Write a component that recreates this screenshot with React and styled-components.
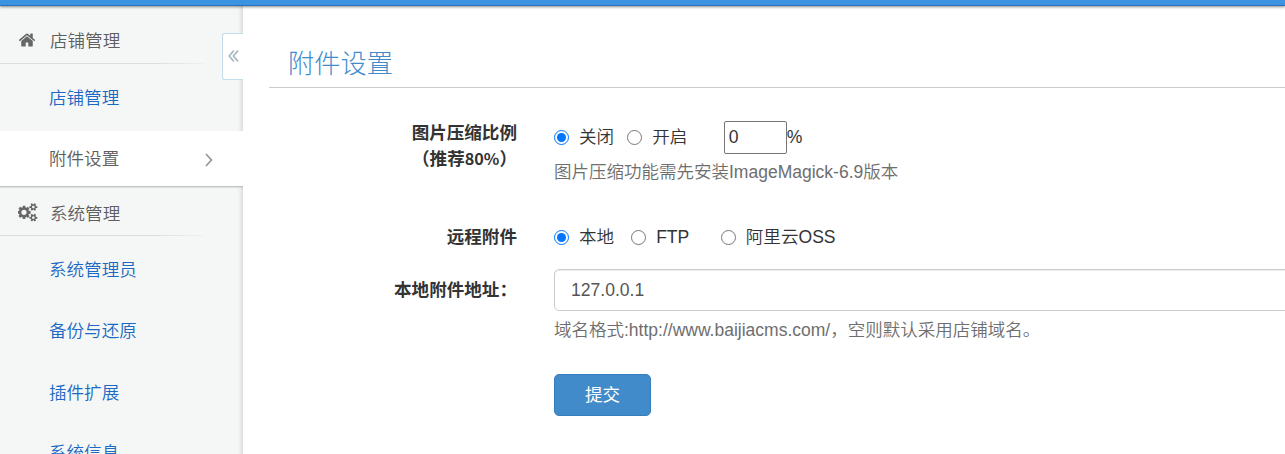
import React from "react";
import styled, { createGlobalStyle, css } from "styled-components";

const GlobalStyle = createGlobalStyle`
  *, *::before, *::after { box-sizing: border-box; }
  html, body { margin: 0; background: #fff; }
  body {
    height: 454px;
    overflow: hidden;
    color: #333;
    font: 350 17.57px/25px "Liberation Sans", "Noto Sans CJK SC", sans-serif;
  }
`;

const Page = styled.div`
  height: 454px;
  display: flex;
  flex-direction: column;
  overflow: hidden;
`;

const TopBar = styled.header`
  flex: none;
  height: 6px;
  position: relative;
  z-index: 3;
  background: #3c93e0;
  border-bottom: 1px solid #2a72b8;
  box-shadow: 0 1px 3px rgba(0, 0, 0, 0.45);
`;

const Columns = styled.div`
  flex: 1;
  min-height: 0;
  display: flex;
`;

const Sidebar = styled.nav`
  flex: none;
  width: 243px;
  position: relative;
  overflow: hidden;
  background: linear-gradient(to left, #dcdedd 0, #edefee 3px, #f5f7f7 6px);
`;

const GroupTitle = styled.div`
  height: ${(p) => p.$height}px;
  width: 205px;
  display: flex;
  align-items: flex-end;
  padding: 0 0 ${(p) => p.$bottom}px ${(p) => p.$left}px;
  color: #5e5e5e;
  border-bottom: 1px solid;
  border-image: linear-gradient(to right, #dcdedd 75%, #f0f2f2) 1;

  svg {
    flex: none;
    fill: #666;
    margin-bottom: 5px;
  }
  span {
    margin-left: ${(p) => p.$gap}px;
    white-space: nowrap;
  }
`;

const MenuItem = styled.a`
  height: ${(p) => p.$height}px;
  display: flex;
  align-items: center;
  justify-content: space-between;
  padding: 1px 30px 0 49px;
  color: #1b69c3;
  ${(p) =>
    p.$active &&
    css`
      padding-top: 2px;
      color: #5e5e5e;
      background: #fff;
      border-bottom: 1px solid #c2c4c4;
      box-shadow: 0 1px 1px rgba(0, 0, 0, 0.08);
    `}
`;

const CollapseTab = styled.button`
  position: absolute;
  top: 27px;
  right: 0;
  width: 21px;
  height: 47px;
  padding: 0 0 2px;
  display: flex;
  align-items: center;
  justify-content: center;
  background: #fff;
  border: 1px solid #c4ddec;
  border-right: 0;
  border-radius: 3px 0 0 3px;
`;

const Main = styled.main`
  flex: 1;
  min-width: 0;
  padding: 31px 0 0 26px;
`;

const Title = styled.h3`
  height: 51px;
  margin: 0;
  padding: 11px 0 0 19px;
  border-bottom: 1px solid #ccc;
  color: #428bca;
  font-size: 26.25px;
  line-height: 32px;
  font-weight: 300;
`;

const Row = styled.div`
  display: flex;
  margin-top: ${(p) => p.$top}px;
`;

const Label = styled.label`
  flex: none;
  width: 248px;
  margin-right: 37px;
  padding-top: ${(p) => p.$top || 0}px;
  text-align: right;
  font-weight: 700;

  span {
    display: block;
    height: 25px;
    line-height: 24px;
  }
`;

const Digits = styled.b`
  font-family: "Noto Sans CJK SC", sans-serif;
  font-size: 16.2px;
  font-weight: 700;
`;

const Field = styled.div`
  flex: 1;
  min-width: 0;
`;

const Options = styled.div`
  height: ${(p) => p.$height}px;
  display: flex;
  align-items: center;
`;

const Option = styled.label`
  display: flex;
  align-items: center;
  margin-right: ${(p) => p.$after || 0}px;
  white-space: nowrap;
`;

const Radio = styled.input.attrs({ type: "radio" })`
  width: 15px;
  height: 15px;
  margin: 0 10px 1px 0;
`;

const RatioInput = styled.input`
  width: 63px;
  height: 33px;
  padding: 0 4px;
  border: 1px solid #767676;
  border-radius: 2px;
  background: #fff;
  color: #333;
  font: inherit;
`;

const Help = styled.p`
  margin: ${(p) => p.$top}px 0 0;
  color: #6e6e6e;
  font-size: 17.5px;
  white-space: nowrap;
`;

const TextInput = styled.input`
  display: block;
  width: 760px;
  height: 42px;
  padding: 0 16px;
  border: 1px solid #ccc;
  border-radius: 5px;
  box-shadow: inset 0 1px 1px rgba(0, 0, 0, 0.075);
  color: #555;
  font: inherit;
`;

const Submit = styled.button`
  display: block;
  width: 97px;
  height: 42px;
  margin: 31px 0 0;
  padding: 0;
  border: 1px solid #357ebd;
  border-radius: 5px;
  background: #428bca;
  color: #fff;
  font: inherit;
  font-weight: 400;
`;

const HomeIcon = () => (
  <svg width="18" height="18" viewBox="0 0 1792 1792">
    <path d="M1472 992v480q0 26-19 45t-45 19h-384v-384h-256v384h-384q-26 0-45-19t-19-45v-480q0-1 .5-3t.5-3l575-474 575 474q1 2 1 6zm223-69l-62 74q-8 9-21 11h-3q-13 0-21-7l-692-577-692 577q-12 8-24 7-13-2-21-11l-62-74q-8-10-7-23.5t11-21.5l719-599q32-26 76-26t76 26l244 204v-195q0-14 9-23t23-9h192q14 0 23 9t9 23v408l219 182q10 8 11 21.5t-7 23.5z" />
  </svg>
);

const smallCog =
  "v140q0 16-149 31-12 27-30 52 51 113 51 138 0 4-4 7-122 71-124 71-8 0-46-47t-52-68q-20 2-30 2t-30-2q-14 21-52 68t-46 47q-2 0-124-71-4-3-4-7 0-25 51-138-18-25-30-52-149-15-149-31v-140q0-16 149-31 13-29 30-52-51-113-51-138 0-4 4-7 4-2 35-20t59-34 30-16q8 0 46 46.5t52 67.5q20-2 30-2t30 2q51-71 92-112l6-2q4 0 124 70 4 3 4 7 0 25-51 138 17 23 30 52 149 15 149 31z";

const CogsIcon = () => (
  <svg width="20" height="18.7" viewBox="0 0 1920 1792">
    <path
      fillRule="evenodd"
      d={
        "M832 896q0-106-75-181t-181-75-181 75-75 181 75 181 181 75 181-75 75-181zM1600 1408q0-52-38-90t-90-38-90 38-38 90q0 53 37.5 90.5t90.5 37.5 90.5-37.5 37.5-90.5zM1600 384q0-52-38-90t-90-38-90 38-38 90q0 53 37.5 90.5t90.5 37.5 90.5-37.5 37.5-90.5zM1216 805v185q0 10-7 19.5t-16 10.5l-155 24q-11 35-32 76 34 48 90 115 7 11 7 20 0 12-7 19-23 30-82.5 89.5t-78.5 59.5q-11 0-21-7l-115-90q-37 19-77 31-11 108-23 155-7 24-30 24h-186q-11 0-20-7.5t-10-17.5l-23-153q-34-10-75-31l-118 89q-7 7-20 7-11 0-21-8-144-133-144-160 0-9 7-19 10-14 41-53t47-61q-23-44-35-82l-152-24q-10-1-17-9.5t-7-19.5v-185q0-10 7-19.5t16-10.5l155-24q11-35 32-76-34-48-90-115-7-11-7-20 0-12 7-20 22-30 82-89t79-59q11 0 21 7l115 90q34-18 77-32 11-108 23-154 7-24 30-24h186q11 0 20 7.5t10 17.5l23 153q34 10 75 31l118-89q8-7 20-7 11 0 21 8 144 133 144 160 0 8-7 19-12 16-42 54t-45 60q23 48 34 82l152 23q10 2 17 10.5t7 19.5z" +
        "M1856 1338" + smallCog +
        "M1856 314" + smallCog
      }
    />
  </svg>
);

const ChevronRight = () => (
  <svg width="8" height="14" viewBox="0 0 8 14" fill="none" stroke="#999" strokeWidth="1.8">
    <path d="M1 1l5.4 6L1 13" />
  </svg>
);

const DoubleLeft = () => (
  <svg width="11" height="12" viewBox="0 0 11 12" fill="none" stroke="#aabac4" strokeWidth="1.7">
    <path d="M5.8 .6L1.2 6l4.6 5.4M10 .6L5.4 6 10 11.4" />
  </svg>
);

export default function App() {
  return (
    <Page>
      <GlobalStyle />
      <TopBar />
      <Columns>
        <Sidebar>
          <GroupTitle $height={58} $left={17.5} $gap={14.5} $bottom={9}>
            <HomeIcon />
            <span>店铺管理</span>
          </GroupTitle>
          <MenuItem $height={67}>店铺管理</MenuItem>
          <MenuItem $active $height={56}>
            附件设置
            <ChevronRight />
          </MenuItem>
          <GroupTitle $height={49} $left={18} $gap={12} $bottom={8}>
            <CogsIcon />
            <span>系统管理</span>
          </GroupTitle>
          <MenuItem $height={67}>系统管理员</MenuItem>
          <MenuItem $height={56}>备份与还原</MenuItem>
          <MenuItem $height={67}>插件扩展</MenuItem>
          <MenuItem $height={53}>系统信息</MenuItem>
          <CollapseTab aria-label="收起">
            <DoubleLeft />
          </CollapseTab>
        </Sidebar>
        <Main>
          <Title>附件设置</Title>
          <Row $top={33}>
            <Label>
              图片压缩比例
              <span>
                （推荐<Digits>80%</Digits>）
              </span>
            </Label>
            <Field>
              <Options $height={33}>
                <Option $after={13}>
                  <Radio name="ratio" defaultChecked />
                  关闭
                </Option>
                <Option $after={36.6}>
                  <Radio name="ratio" />
                  开启
                </Option>
                <RatioInput defaultValue="0" />%
              </Options>
              <Help $top={6}>图片压缩功能需先安装ImageMagick-6.9版本</Help>
            </Field>
          </Row>
          <Row $top={39}>
            <Label $top={1}>远程附件</Label>
            <Field>
              <Options $height={27}>
                <Option $after={17}>
                  <Radio name="remote" defaultChecked />
                  本地
                </Option>
                <Option $after={31.5}>
                  <Radio name="remote" />
                  FTP
                </Option>
                <Option>
                  <Radio name="remote" />
                  阿里云OSS
                </Option>
              </Options>
            </Field>
          </Row>
          <Row $top={18}>
            <Label $top={9}>本地附件地址：</Label>
            <Field>
              <TextInput defaultValue="127.0.0.1" />
              <Help $top={7}>域名格式:http://www.baijiacms.com/，空则默认采用店铺域名。</Help>
              <Submit>提交</Submit>
            </Field>
          </Row>
        </Main>
      </Columns>
    </Page>
  );
}
